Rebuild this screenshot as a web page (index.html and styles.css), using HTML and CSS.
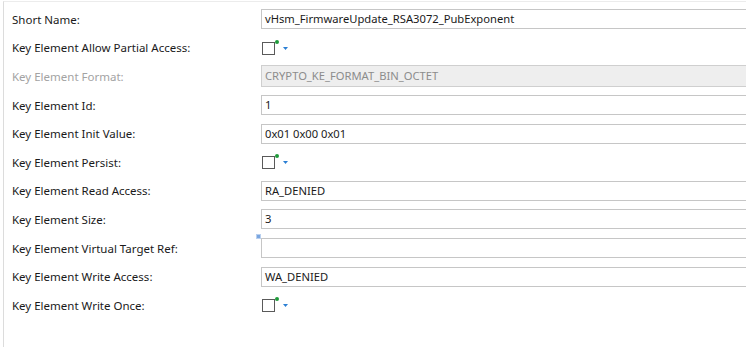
FILE: index.html
```html
<!DOCTYPE html>
<html lang="en">
<head>
    <meta charset="UTF-8">
    <title>Key Element</title>
    <link rel="stylesheet" href="styles.css">
</head>
<body>
    <div class="panel">
        <div class="form">
            <div class="label">Short Name:</div>
            <div class="field"><div class="input">vHsm_FirmwareUpdate_RSA3072_PubExponent</div></div>

            <div class="label">Key Element Allow Partial Access:</div>
            <div class="field"><span class="check"><span class="box"></span><span class="dot"></span><svg class="arrow" width="5" height="3" viewBox="0 0 5 3"><path d="M0 0 L5 0 L2.5 3 Z" fill="#2a7fd4"/></svg></span></div>

            <div class="label disabled">Key Element Format:</div>
            <div class="field"><div class="input readonly">CRYPTO_KE_FORMAT_BIN_OCTET</div></div>

            <div class="label">Key Element Id:</div>
            <div class="field"><div class="input">1</div></div>

            <div class="label">Key Element Init Value:</div>
            <div class="field"><div class="input">0x01 0x00 0x01</div></div>

            <div class="label">Key Element Persist:</div>
            <div class="field"><span class="check"><span class="box"></span><span class="dot"></span><svg class="arrow" width="5" height="3" viewBox="0 0 5 3"><path d="M0 0 L5 0 L2.5 3 Z" fill="#2a7fd4"/></svg></span></div>

            <div class="label">Key Element Read Access:</div>
            <div class="field"><div class="input">RA_DENIED</div></div>

            <div class="label">Key Element Size:</div>
            <div class="field"><div class="input">3</div></div>

            <div class="label">Key Element Virtual Target Ref:</div>
            <div class="field"><span class="ref-mark"></span><div class="input"></div></div>

            <div class="label">Key Element Write Access:</div>
            <div class="field"><div class="input">WA_DENIED</div></div>

            <div class="label">Key Element Write Once:</div>
            <div class="field"><span class="check"><span class="box"></span><span class="dot"></span><svg class="arrow" width="5" height="3" viewBox="0 0 5 3"><path d="M0 0 L5 0 L2.5 3 Z" fill="#2a7fd4"/></svg></span></div>
        </div>
    </div>
</body>
</html>
```

FILE: styles.css
```css
body {
    margin: 0;
    padding: 0;
    background-color: #fff;
    font-family: "Noto Sans", "Open Sans", sans-serif;
    font-size: 11.5px;
    color: #1a1a1a;
    overflow: hidden;
}

.panel {
    margin-top: 1px;
    margin-left: 3px;
    height: 346px;
    border-top: 1px solid #ececec;
    border-left: 1px solid #dcdcdc;
    overflow: hidden;
}

.form {
    display: grid;
    grid-template-columns: 249px 1fr;
    grid-auto-rows: 28.6px;
    padding: 3px 0 0 8px;
}

.label {
    display: flex;
    align-items: center;
    white-space: nowrap;
}

.label.disabled {
    color: #a3a3a3;
}

.field {
    position: relative;
    display: flex;
    align-items: center;
}

.input {
    box-sizing: border-box;
    flex-shrink: 0;
    width: calc(100% + 10px);
    height: 20px;
    border: 1px solid #c6c6c6;
    background-color: #fff;
    padding: 0 3px;
    font-size: 11.2px;
    line-height: 18px;
    white-space: nowrap;
}

.input.readonly {
    height: 22px;
    line-height: 20px;
    background-color: #eeeeee;
    border-color: #cfcfcf;
    color: #8c8c8c;
}

.check {
    position: relative;
    display: inline-block;
    width: 30px;
    height: 14px;
    margin-left: 1px;
}

.box {
    position: absolute;
    left: 0;
    top: 1px;
    box-sizing: border-box;
    width: 13px;
    height: 13px;
    border: 1px solid #5a5a5a;
    background-color: #fff;
}

.dot {
    position: absolute;
    left: 13px;
    top: -1px;
    width: 4px;
    height: 4px;
    border-radius: 50%;
    background-color: #1f9b3a;
}

.arrow {
    position: absolute;
    left: 21px;
    top: 6px;
}

.ref-mark {
    position: absolute;
    left: -5px;
    top: 0;
    width: 5px;
    height: 5px;
    background-color: #7aa6e0;
    border: 1px solid #b9d0ef;
    box-sizing: border-box;
}
```
